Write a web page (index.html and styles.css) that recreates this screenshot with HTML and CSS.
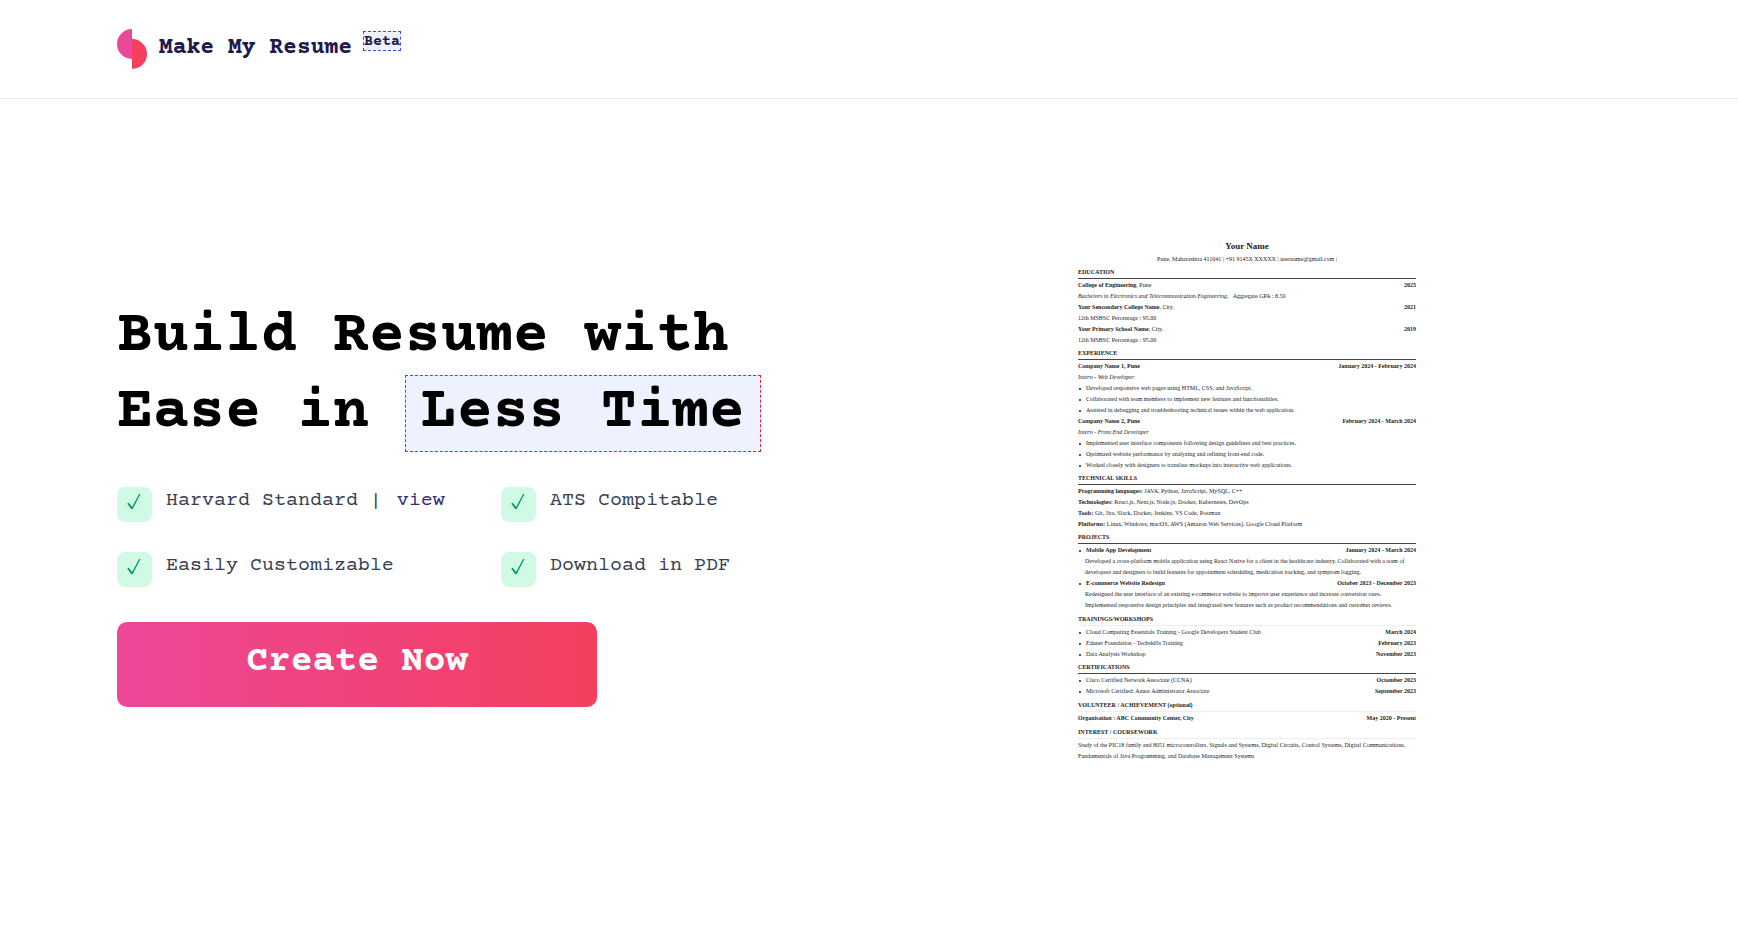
FILE: index.html
```html
<!DOCTYPE html>
<html lang="en">
<head>
<meta charset="utf-8">
<title>Make My Resume</title>
<link rel="stylesheet" href="styles.css">
</head>
<body>
<header class="site-header">
  <a class="brand" href="#">
    <svg class="brand-logo" viewBox="0 0 30 40" aria-hidden="true"><path d="M15 0v30a15 15 0 0 1 0-30z" fill="#ec4899"/><path d="M15 10a15 15 0 0 1 0 30z" fill="#f43f5e"/></svg>
    <span class="brand-name">Make My Resume</span>
    <span class="beta">Beta</span>
  </a>
</header>
<main class="hero">
  <section class="pitch">
    <h1 class="title">Build Resume with<br>Ease in <span class="mark">Less Time</span></h1>
    <ul class="features">
      <li class="feature"><svg class="tick" viewBox="0 0 35 35" aria-hidden="true"><path d="M10.2 16.4l1.5-.7 3.4 4.4 7-13.1h1.4L15.7 22h-1.6z"/></svg><span>Harvard Standard | <a class="view" href="#resume">view</a></span></li>
      <li class="feature"><svg class="tick" viewBox="0 0 35 35" aria-hidden="true"><path d="M10.2 16.4l1.5-.7 3.4 4.4 7-13.1h1.4L15.7 22h-1.6z"/></svg><span>ATS Compitable</span></li>
      <li class="feature"><svg class="tick" viewBox="0 0 35 35" aria-hidden="true"><path d="M10.2 16.4l1.5-.7 3.4 4.4 7-13.1h1.4L15.7 22h-1.6z"/></svg><span>Easily Customizable</span></li>
      <li class="feature"><svg class="tick" viewBox="0 0 35 35" aria-hidden="true"><path d="M10.2 16.4l1.5-.7 3.4 4.4 7-13.1h1.4L15.7 22h-1.6z"/></svg><span>Download in PDF</span></li>
    </ul>
    <button class="create" type="button">Create Now</button>
  </section>
  <article class="resume" id="resume">
    <h2 class="name">Your Name</h2>
    <p class="contact">Pune, Maharashtra 411041 | +91 9145X XXXXX | username@gmail.com |</p>

    <h3 class="head">EDUCATION</h3>
    <p class="row"><span><b>College of Engineering</b>, Pune</span><b>2025</b></p>
    <p class="row"><span><i>Bachelors in Electronics and Telecommunication Engineering.</i> &nbsp; Aggregate GPA : 8.50</span></p>
    <p class="row"><span><b>Your Sencondary College Name</b>, City.</span><b>2021</b></p>
    <p class="row">12th MSBSC Percentage : 95.00</p>
    <p class="row"><span><b>Your Primary School Name</b>, City.</span><b>2019</b></p>
    <p class="row">12th MSBSC Percentage : 95.00</p>

    <h3 class="head">EXPERIENCE</h3>
    <p class="row"><b>Company Name 1, Pune</b><b>January 2024 - February 2024</b></p>
    <p class="row"><i>Intern - Web Developer</i></p>
    <ul class="list">
      <li class="row item">Developed responsive web pages using HTML, CSS, and JavaScript.</li>
      <li class="row item">Collaborated with team members to implement new features and functionalities.</li>
      <li class="row item">Assisted in debugging and troubleshooting technical issues within the web application.</li>
    </ul>
    <p class="row"><b>Company Name 2, Pune</b><b>February 2024 - March 2024</b></p>
    <p class="row"><i>Intern - Front End Developer</i></p>
    <ul class="list">
      <li class="row item">Implemented user interface components following design guidelines and best practices.</li>
      <li class="row item">Optimized website performance by analyzing and refining front-end code.</li>
      <li class="row item">Worked closely with designers to translate mockups into interactive web applications.</li>
    </ul>

    <h3 class="head">TECHNICAL SKILLS</h3>
    <p class="row"><span><b>Programming languages:</b> JAVA, Python, JavaScript, MySQL, C++</span></p>
    <p class="row"><span><b>Technologies:</b> React.js, Next.js, Node.js, Docker, Kubernetes, DevOps</span></p>
    <p class="row"><span><b>Tools:</b> Git, Jira, Slack, Docker, Jenkins, VS Code, Postman</span></p>
    <p class="row"><span><b>Platforms:</b> Linux, Windows, macOS, AWS (Amazon Web Services), Google Cloud Platform</span></p>

    <h3 class="head">PROJECTS</h3>
    <ul class="list">
      <li class="row item"><b>Mobile App Development</b><b>January 2024 - March 2024</b></li>
    </ul>
    <p class="detail">Developed a cross-platform mobile application using React Native for a client in the healthcare industry. Collaborated with a team of<br>developers and designers to build features for appointment scheduling, medication tracking, and symptom logging.</p>
    <ul class="list">
      <li class="row item"><b>E-commerce Website Redesign</b><b>October 2023 - December 2023</b></li>
    </ul>
    <p class="detail">Redesigned the user interface of an existing e-commerce website to improve user experience and increase conversion rates.<br>Implemented responsive design principles and integrated new features such as product recommendations and customer reviews.</p>

    <h3 class="head faint">TRAININGS/WORKSHOPS</h3>
    <ul class="list">
      <li class="row item"><span>Cloud Computing Essentials Training - Google Developers Student Club</span><b>March 2024</b></li>
      <li class="row item"><span>Edunet Foundation - Techskills Training</span><b>February 2023</b></li>
      <li class="row item"><span>Data Analysis Workshop</span><b>November 2023</b></li>
    </ul>

    <h3 class="head">CERTIFICATIONS</h3>
    <ul class="list">
      <li class="row item"><span>Cisco Certified Network Associate (CCNA)</span><b>Octomber 2023</b></li>
      <li class="row item"><span>Microsoft Certified: Azure Administrator Associate</span><b>September 2023</b></li>
    </ul>

    <h3 class="head faint">VOLUNTEER / ACHIEVEMENT (optional)</h3>
    <p class="row"><b>Organisation : ABC Community Center, City</b><b>May 2020 - Present</b></p>

    <h3 class="head faint">INTEREST / COURSEWORK</h3>
    <p class="detail flush">Study of the PIC18 family and 8051 microcontrollers, Signals and Systems, Digital Circuits, Control Systems, Digital Communications,<br>Fundamentals of Java Programming, and Database Management Systems</p>
  </article>
</main>
</body>
</html>
```
FILE: styles.css
```css
* { box-sizing: border-box; margin: 0; padding: 0; }
body {
  background: #fff;
  color: #000;
  font-family: "Courier Prime", FreeMono, "Liberation Mono", monospace;
}
a { color: inherit; text-decoration: none; }
ul { list-style: none; }

.site-header { padding: 29px 117px; border-bottom: 1px solid #e5e7eb; }
.brand { display: inline-flex; align-items: flex-start; color: #1e1b4b; font-weight: 700; vertical-align: top; }
.brand-logo { width: 30px; height: 40px; margin-right: 12px; }
.brand-name { font-size: 23px; line-height: 38px; margin-right: 11px; }
.beta { margin-top: 2px; font-size: 15px; line-height: 20px; background: #eef2ff; border: 1px dashed #4f46e5; height: 20px; }

.hero {
  display: grid;
  grid-template-columns: 1fr 1fr;
  align-items: center;
  padding: 140px 117px;
}
.pitch { padding-top: 4px; }
.title { font-size: 60px; line-height: 76px; font-weight: 700; white-space: nowrap; }
.mark { display: inline-block; padding: 0 15px; line-height: 75px; background: #eef2ff; border: 1px dashed #e11d48; vertical-align: top; }
.features {
  display: grid;
  grid-template-columns: 384px max-content;
  row-gap: 30px;
  margin-top: 35px;
  font-size: 20px;
  line-height: 28px;
  color: #374151;
}
.feature { display: flex; gap: 14px; }
.tick { flex: none; width: 35px; height: 35px; border-radius: 8px; background: #d1fae5; fill: #059669; }
.view { margin-left: 3px; color: #312e81; }
.create {
  display: block;
  width: 480px;
  height: 85px;
  margin-top: 35px;
  padding-bottom: 4px;
  border: 0;
  border-radius: 10px;
  background: linear-gradient(to right, #ec4899, #f43f5e);
  color: #fff;
  font: inherit;
  font-size: 37px;
  font-weight: 700;
}

.resume {
  justify-self: center;
  width: 338px;
  margin-left: 4px;
  font-family: "Liberation Serif", "Times New Roman", serif;
  font-size: 6px;
  line-height: 11px;
  color: #222;
  white-space: nowrap;
}
.name { font-size: 9px; line-height: 14px; text-align: center; }
.contact { line-height: 12px; text-align: center; }
.head { margin: 2px 0 1px; font-size: 6px; line-height: 11px; border-bottom: 1px solid #444; }
.faint { margin-top: 3px; border-color: #eee; }
.row { display: flex; justify-content: space-between; }
.item { position: relative; padding-left: 8px; }
.item::before { content: ""; position: absolute; left: 1px; top: 5px; width: 2px; height: 2px; border-radius: 50%; background: #222; }
.detail { padding-left: 7px; }
.flush { padding-left: 0; }
```
